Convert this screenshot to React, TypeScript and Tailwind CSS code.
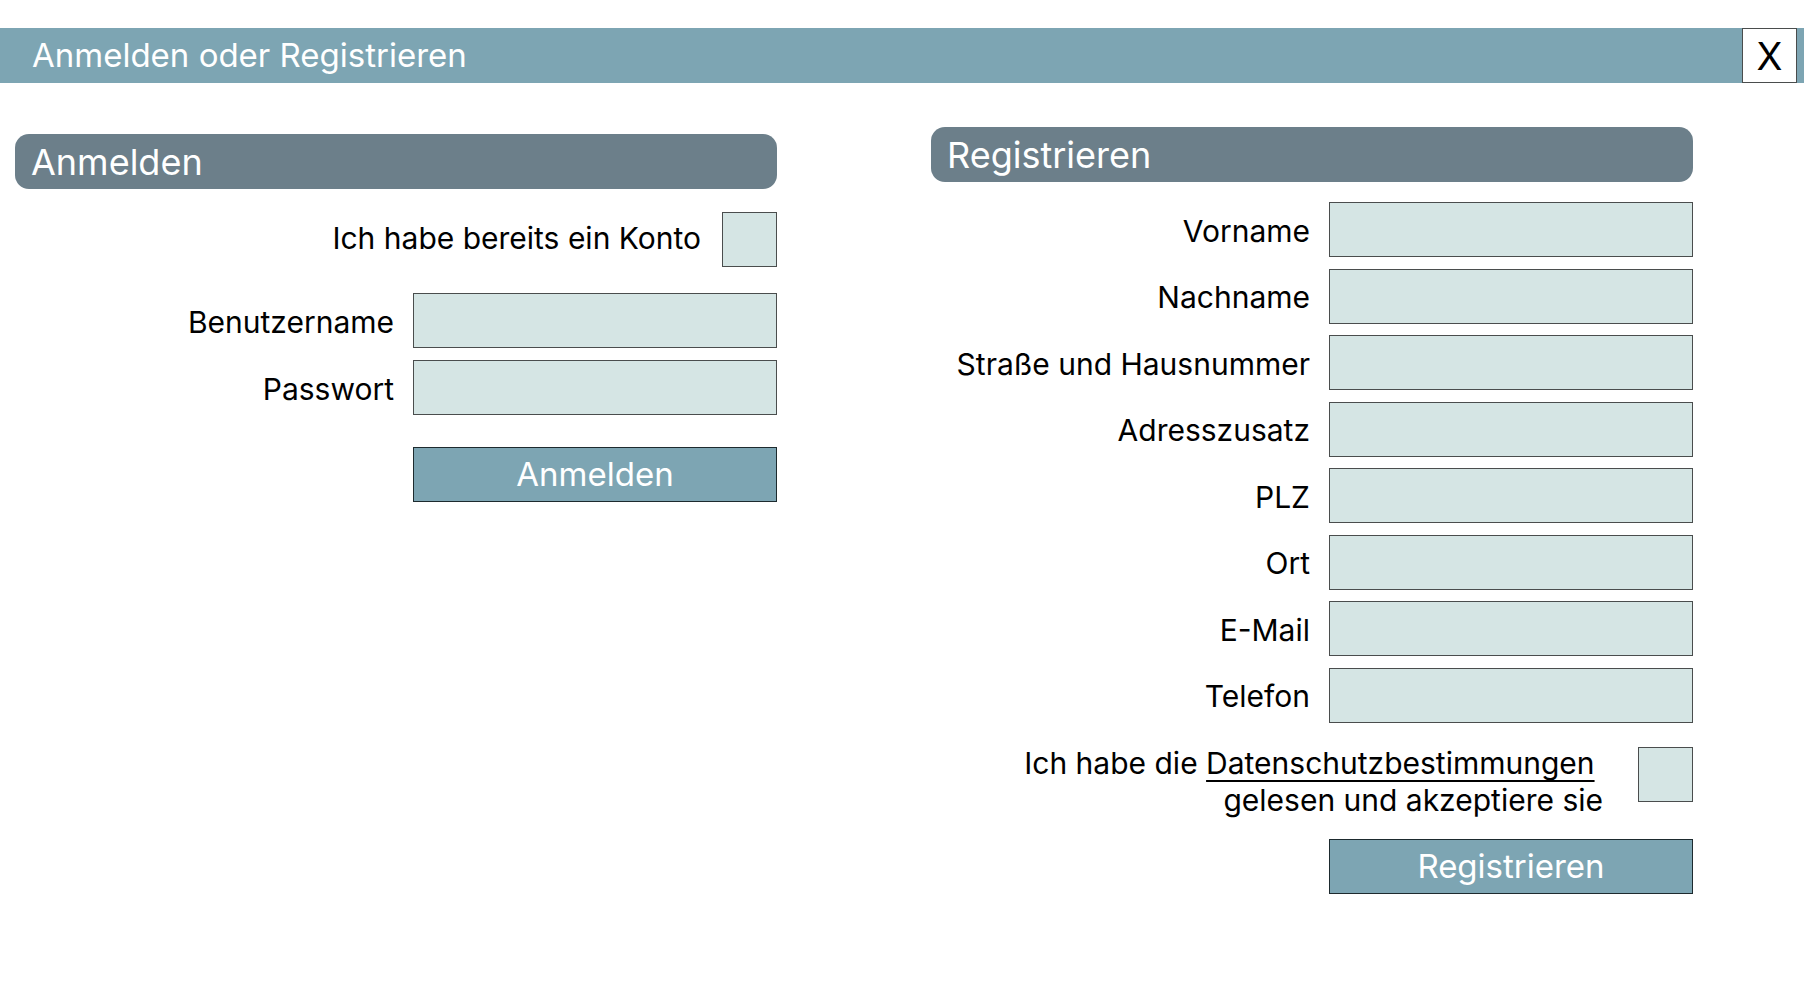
import { useId, type InputHTMLAttributes, type ReactNode } from "react";

function PanelTitle({ children }: { children: ReactNode }) {
  return (
    <h2 className="flex h-[55px] items-center rounded-[14px] bg-[#6c7f8a] px-4 text-[36px] leading-10 text-white">
      {children}
    </h2>
  );
}

function Field({ label, ...props }: { label: string } & InputHTMLAttributes<HTMLInputElement>) {
  const id = useId();
  return (
    <div className="flex items-center justify-end gap-[19px]">
      <label htmlFor={id} className="pt-[2px] text-right text-[30px] leading-9">
        {label}
      </label>
      <input
        id={id}
        className="h-[55px] w-[364px] shrink-0 border border-[#4a4d4d] bg-[#d5e5e4] px-3 text-[30px]"
        {...props}
      />
    </div>
  );
}

function CheckBox({ id }: { id: string }) {
  return (
    <input
      id={id}
      type="checkbox"
      className="size-[55px] shrink-0 appearance-none border border-[#4a4d4d] bg-[#d5e5e4] checked:bg-[#7da5b3]"
    />
  );
}

function SubmitButton({ children }: { children: ReactNode }) {
  return (
    <button
      type="submit"
      className="h-[55px] w-[364px] self-end border border-[#1d2a2e] bg-[#7da5b3] text-[33px] leading-none text-white"
    >
      {children}
    </button>
  );
}

const registerFields = [
  { label: "Vorname", autoComplete: "given-name" },
  { label: "Nachname", autoComplete: "family-name" },
  { label: "Straße und Hausnummer", autoComplete: "address-line1" },
  { label: "Adresszusatz", autoComplete: "address-line2" },
  { label: "PLZ", autoComplete: "postal-code" },
  { label: "Ort", autoComplete: "address-level2" },
  { label: "E-Mail", type: "email", autoComplete: "email" },
  { label: "Telefon", type: "tel", autoComplete: "tel" },
];

export default function App() {
  return (
    <div className="min-h-screen bg-white pt-7 font-['Inter',sans-serif] text-black">
      <header className="flex h-[55px] items-center justify-between bg-[#7da5b3] pl-8 pr-[7px]">
        <h1 className="text-[33px] text-white">Anmelden oder Registrieren</h1>
        <button
          type="button"
          className="flex size-[55px] items-center justify-center border border-[#4a4d4d] bg-white text-[38px] leading-none"
        >
          X
        </button>
      </header>

      <main className="grid grid-cols-2 items-start gap-[154px] pl-[15px] pr-[111px] pt-11">
        <form className="flex flex-col pt-[7px]" onSubmit={(e) => e.preventDefault()}>
          <PanelTitle>Anmelden</PanelTitle>
          <div className="mb-[26px] mt-[23px] flex items-center justify-end gap-[21px]">
            <label htmlFor="has-account" className="pb-[3px] text-[30px] leading-9">
              Ich habe bereits ein Konto
            </label>
            <CheckBox id="has-account" />
          </div>
          <div className="mb-8 flex flex-col gap-3">
            <Field label="Benutzername" type="text" autoComplete="username" />
            <Field label="Passwort" type="password" autoComplete="current-password" />
          </div>
          <SubmitButton>Anmelden</SubmitButton>
        </form>

        <form className="flex flex-col" onSubmit={(e) => e.preventDefault()}>
          <PanelTitle>Registrieren</PanelTitle>
          <div className="mt-5 flex min-h-[521px] flex-col justify-between">
            {registerFields.map((field) => (
              <Field key={field.label} {...field} />
            ))}
          </div>
          <div className="mb-5 mt-[22px] flex items-start justify-end gap-[35px]">
            <label htmlFor="privacy" className="text-right text-[30px] leading-[37px]">
              Ich habe die{" "}
              <a href="#datenschutz" className="underline decoration-2 underline-offset-[6px] [text-decoration-skip-ink:none]">
                Datenschutzbestimmungen
              </a>
              &nbsp;
              <br />
              gelesen und akzeptiere sie
            </label>
            <div className="flex pt-[2px]">
              <CheckBox id="privacy" />
            </div>
          </div>
          <SubmitButton>Registrieren</SubmitButton>
        </form>
      </main>
    </div>
  );
}
